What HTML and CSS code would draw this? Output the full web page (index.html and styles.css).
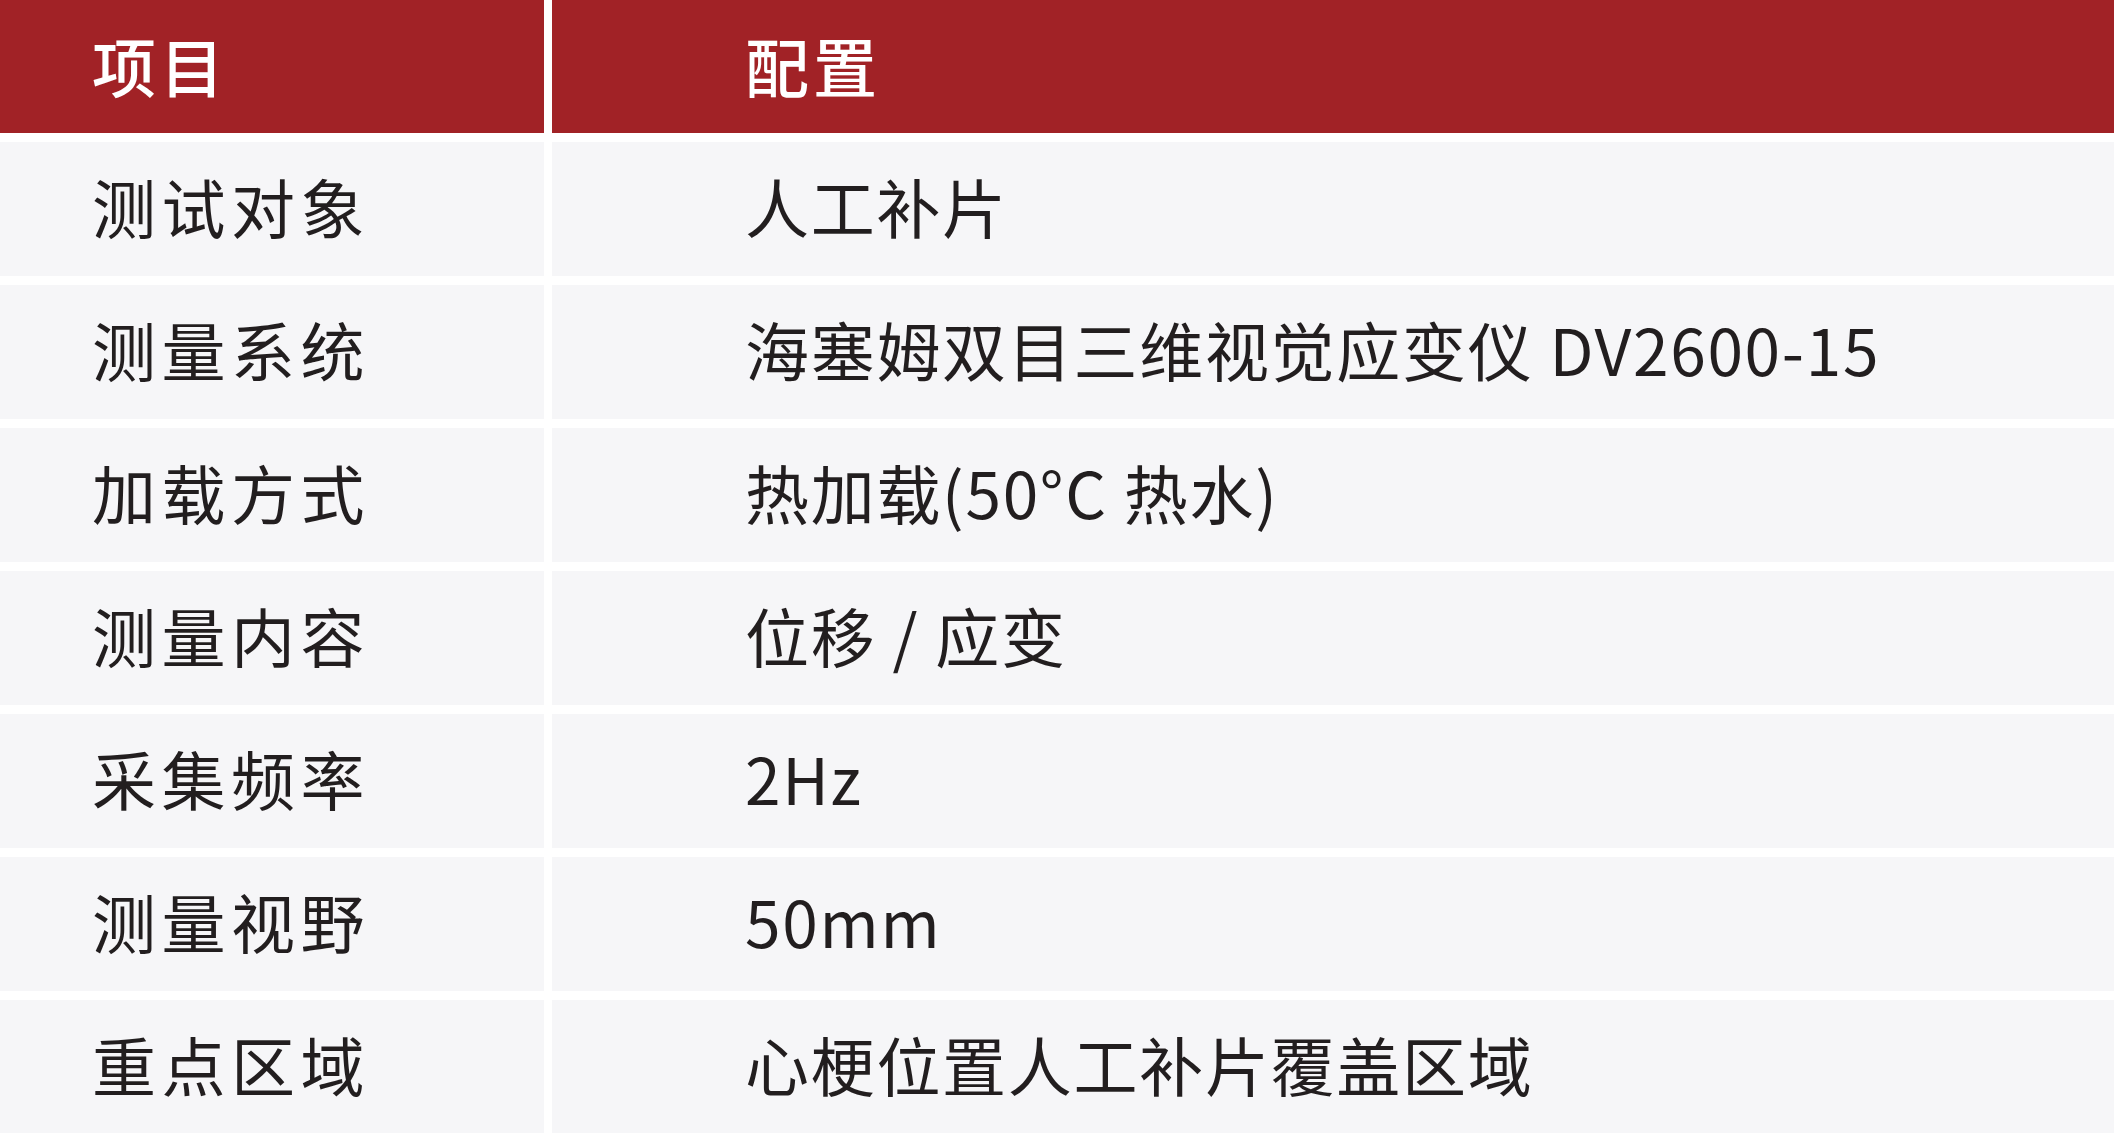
FILE: index.html
```html
<!DOCTYPE html>
<html lang="zh-CN">
<head>
<meta charset="utf-8">
<title>测试配置</title>
<link rel="stylesheet" href="styles.css">
</head>
<body>
<div class="spec-table">
  <div class="cell head key">项目</div>
  <div class="cell head val">配置</div>

  <div class="cell key">测试对象</div>
  <div class="cell val">人工补片</div>

  <div class="cell key">测量系统</div>
  <div class="cell val">海塞姆双目三维视觉应变仪 DV2600-15</div>

  <div class="cell key">加载方式</div>
  <div class="cell val">热加载(50°C 热水)</div>

  <div class="cell key">测量内容</div>
  <div class="cell val">位移 / 应变</div>

  <div class="cell key">采集频率</div>
  <div class="cell val">2Hz</div>

  <div class="cell key">测量视野</div>
  <div class="cell val">50mm</div>

  <div class="cell key">重点区域</div>
  <div class="cell val">心梗位置人工补片覆盖区域</div>
</div>
</body>
</html>
```

FILE: styles.css
```css
html, body {
  margin: 0;
  padding: 0;
  background: #ffffff;
}

body {
  font-family: "Noto Sans CJK SC", "Noto Sans", sans-serif;
  color: #221e1f;
}

.spec-table {
  display: grid;
  grid-template-columns: 544px 1fr;
  grid-template-rows: 133px repeat(7, 134px);
  gap: 9px 8px;
  width: 2114px;
}

.cell {
  display: flex;
  align-items: center;
  box-sizing: border-box;
  padding-bottom: 8px;
  background: #f6f6f8;
  font-size: 64px;
  line-height: 1;
  white-space: nowrap;
}

.cell.key {
  padding-left: 92px;
  letter-spacing: 5.5px;
}

.cell.val {
  padding-left: 193px;
  letter-spacing: 1.7px;
}

.cell.head {
  background: #a12226;
  color: #ffffff;
  font-weight: 500;
  letter-spacing: 4px;
  padding-bottom: 6px;
}
```
